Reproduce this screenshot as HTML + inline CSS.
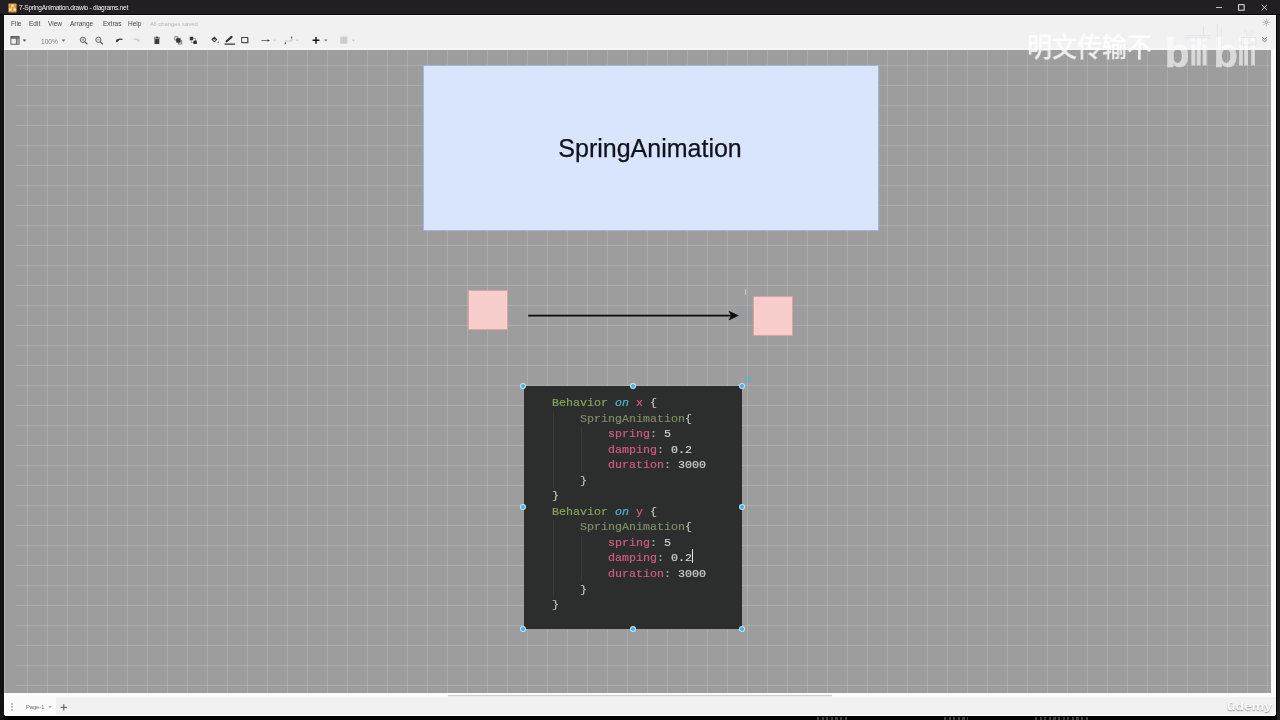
<!DOCTYPE html>
<html lang="en">
<head>
<meta charset="utf-8">
<title>7-SpringAnimation.drawio - diagrams.net</title>
<style>
*{margin:0;padding:0;box-sizing:border-box}
html,body{width:1280px;height:720px;overflow:hidden;background:#0c0c0d;font-family:"Liberation Sans",sans-serif}
.abs{position:absolute}
#title,.mi,.code pre,#wm,#bili,#ud,.gs{will-change:transform}
#win{position:absolute;left:0;top:0;width:1280px;height:720px;background:linear-gradient(to right,#121214 0,#121214 4px,#000 4px,#000 1277px,#1c1c1c 1277px);overflow:hidden}
#titlebar{position:absolute;left:0;top:0;width:1280px;height:15px;background:#211f22;border-bottom:1px solid #050505}
#title{position:absolute;left:19px;top:3.3px;font-size:6.6px;line-height:9px;color:#f2f2f2;white-space:nowrap;letter-spacing:-0.27px}
#app{position:absolute;left:4px;top:15px;width:1272px;height:701px;background:#f1f1f2;border-radius:0 0 3px 3px;overflow:hidden}
#menubar{position:absolute;left:0;top:0;width:1272px;height:17px;background:#f1f1f2;border-top:1.5px solid #fbfbfb}
.mi{position:absolute;top:4px;font-size:6.5px;line-height:8px;color:#444;white-space:nowrap}
#toolbar{position:absolute;left:0;top:17px;width:1272px;height:18px;background:#f1f1f2;border-bottom:2px solid #f6f6f6}
#canvas{position:absolute;left:0;top:35px;width:1267px;height:643px;border-left:1px solid #b2b2b4;background-color:#9d9d9d;overflow:hidden}
#grid{position:absolute;left:11px;top:0;width:1255px;height:643px;
 background-image:linear-gradient(to right,rgba(255,255,255,.135) 1px,transparent 1px),linear-gradient(to bottom,rgba(255,255,255,.135) 1px,transparent 1px);
 background-size:20px 20px;background-position:-9px 15px}
#vscroll{position:absolute;left:1267px;top:35px;width:5px;height:643px;background:#fbfbfb}
#bottombar{position:absolute;left:0;top:678px;width:1272px;height:23px;background:#f1f1f1;border-top:4px solid #fcfcfc;border-bottom:1px solid #fdfdfd}
#pagetab{position:absolute;left:0;top:0;width:52px;height:19px;background:#fbfbfb}
.code{position:absolute;left:524px;top:386px;width:218px;height:243px;background:#2c2e2d}
.code pre{position:absolute;left:28px;top:9.6px;font-family:"Liberation Mono",monospace;font-size:11.67px;line-height:15.55px;color:#cfcfc2;white-space:pre}
.k{color:#86a358}.o{color:#4fb3c4;font-style:italic}.p{color:#d35a82}.t{color:#7b8c66}.n{color:#cfcfcb}.b{color:#c2c2b4}.c{color:#9aa0a6}
.code pre span{-webkit-text-stroke:.2px currentColor}
.ig{position:absolute;width:1px;background:rgba(255,255,255,.06)}
.h{position:absolute;width:6px;height:6px;border-radius:50%;background:#45b1e6;border:.7px solid rgba(220,240,250,.85)}
</style>
</head>
<body>
<div id="win">
 <div id="titlebar">
  <svg class="abs" style="left:7.5px;top:2.5px" width="9" height="10" viewBox="0 0 9 10"><rect x=".4" y=".5" width="8.2" height="9" rx=".8" fill="#e29a3c"/><path d="M4.5 3L2.6 6.2M4.5 3l1.9 3.2" stroke="#f3c98a" stroke-width=".7"/><rect x="3.3" y="1.6" width="2.4" height="2" rx=".3" fill="#fbe3b5"/><rect x="1.1" y="5.4" width="2.5" height="2.1" rx=".3" fill="#fdeedd"/><rect x="5.4" y="5.4" width="2.5" height="2.1" rx=".3" fill="#fdeedd"/></svg>
  <div id="title">7-SpringAnimation.drawio - diagrams.net</div>
  <svg class="abs" style="left:1200px;top:0" width="80" height="15" viewBox="1200 0 80 15">
   <path d="M1216 7.5h6" stroke="#e8e8e8" stroke-width=".8"/>
   <rect x="1238.6" y="4.7" width="5.5" height="5.5" fill="none" stroke="#e8e8e8" stroke-width="1"/>
   <path d="M1261.6 4.8l5.4 5.4M1267 4.8l-5.4 5.4" stroke="#e8e8e8" stroke-width=".8"/>
  </svg>
 </div>
 <div id="app">
  <div id="menubar">
   <span class="mi" style="left:7px">File</span>
   <span class="mi" style="left:24.5px">Edit</span>
   <span class="mi" style="left:44px">View</span>
   <span class="mi" style="left:66px">Arrange</span>
   <span class="mi" style="left:98.5px">Extras</span>
   <span class="mi" style="left:124px">Help</span>
   <span class="mi" style="left:146.3px;color:#b8b8b8;font-size:5.9px">All changes saved</span>
  </div>
  <div id="toolbar">
   <svg class="abs" style="left:0;top:0" width="400" height="18" viewBox="4 32 400 18">
    <!-- sidebar/format icon -->
    <rect x="10.9" y="36.6" width="8.2" height="7.6" fill="none" stroke="#484848" stroke-width=".85"/>
    <path d="M10.9 38.3H19.1M16.4 38.3V44.2" stroke="#484848" stroke-width=".85" fill="none"/><path d="M10.9 37.2H19.1" stroke="#484848" stroke-width=".9"/><rect x="16.8" y="38.7" width="1.9" height="5.1" fill="#9a9a9a"/>
    <path d="M22.6 39.6h3.8l-1.9 2.2z" fill="#555"/>
    <!-- zoom dropdown -->
    <path d="M61.6 39.6h3.8l-1.9 2.2z" fill="#666"/>
    <!-- zoom in -->
    <circle cx="82.9" cy="39.8" r="2.6" fill="none" stroke="#505050" stroke-width=".9"/>
    <path d="M84.9 41.8L87.1 44" stroke="#505050" stroke-width="1.1" stroke-linecap="round"/>
    <path d="M81.6 39.8h2.6M82.9 38.5v2.6" stroke="#666" stroke-width=".6"/>
    <!-- zoom out -->
    <circle cx="98.4" cy="39.8" r="2.6" fill="none" stroke="#505050" stroke-width=".9"/>
    <path d="M100.4 41.8L102.6 44" stroke="#505050" stroke-width="1.1" stroke-linecap="round"/>
    <path d="M97.1 39.8h2.6" stroke="#666" stroke-width=".6"/>
    <!-- undo -->
    <path d="M116.6 41.6C117.4 39.5 119.8 38.7 122.5 39.4" stroke="#333" stroke-width="1.1" fill="none"/>
    <path d="M115.9 39.4l3.3 0.6l-2.6 2.6z" fill="#333"/>
    <!-- redo -->
    <path d="M139.2 41.6C138.4 39.4 136 38.6 133.6 39.3" stroke="#cfcfcf" stroke-width="1.3" fill="none"/>
    <path d="M139.7 39.4l-3.3 0.6l2.6 2.6z" fill="#cfcfcf"/>
    <!-- delete -->
    <path d="M153.8 37.4h6.2v1h-6.2zM155.9 36.6h2v.9h-2zM154.5 38.9h4.8v5h-4.8z" fill="#3c3c3c"/>
    <!-- to front -->
    <rect x="174.8" y="36.8" width="3.2" height="3.2" fill="none" stroke="#555" stroke-width=".7"/>
    <rect x="178.6" y="40.8" width="3.2" height="3.2" fill="none" stroke="#555" stroke-width=".7"/>
    <rect x="176.2" y="38.2" width="4.4" height="4.4" fill="#333"/>
    <!-- to back -->
    <rect x="191.2" y="38.2" width="4.4" height="4.4" fill="#fff" stroke="#777" stroke-width=".6"/>
    <rect x="189.8" y="36.8" width="3.4" height="3.4" fill="#333"/>
    <rect x="193.4" y="40.6" width="3.4" height="3.4" fill="#333"/>
    <!-- fill -->
    <path d="M214.4 36.4l3 3l-3 3l-3-3z" fill="#333"/>
    <path d="M212.6 39.4h3.6l-1.8 1.8z" fill="#f2f2f2"/>
    <circle cx="218.2" cy="42.2" r=".7" fill="#444"/>
    <!-- line color -->
    <path d="M226.6 41.3L231.6 36.9" stroke="#333" stroke-width="2.1" stroke-linecap="round"/>
    <path d="M224.6 44.2h10.5" stroke="#333" stroke-width="1.2"/>
    <!-- shadow -->
    <rect x="241.7" y="37.5" width="6" height="5" fill="#f2f2f2" stroke="#444" stroke-width="1"/>
    <path d="M242.4 43.2h6v-5" stroke="#888" stroke-width=".6" fill="none"/>
    <!-- connection -->
    <path d="M261.4 40.5h7" stroke="#555" stroke-width=".8"/>
    <path d="M270 40.5l-2.6-1.3v2.6z" fill="#444"/>
    <path d="M273 39.7h3.2l-1.6 1.9z" fill="#c8c8c8"/>
    <!-- waypoint -->
    <path d="M285.4 43.6v-2.6h6.2v-3.8" stroke="#bdbdbd" stroke-width=".8" fill="none"/>
    <rect x="284.8" y="42.4" width="1.2" height="1.8" fill="#555"/>
    <rect x="291" y="36.6" width="1.2" height="1.8" fill="#555"/>
    <path d="M295.6 39.7h3.2l-1.6 1.9z" fill="#c8c8c8"/>
    <!-- plus -->
    <path d="M312.6 40.3h6.8M316 36.9v6.8" stroke="#161616" stroke-width="1.5"/>
    <path d="M324 39.6h3.6l-1.8 2z" fill="#777"/>
    <!-- table -->
    <rect x="340.2" y="36.6" width="7.2" height="7.2" fill="#cdcdcd"/>
    <path d="M351.8 39.7h3.2l-1.6 1.9z" fill="#c4c4c4"/>
   </svg>
   <span class="abs gs" style="left:37px;top:5.6px;font-size:6.6px;line-height:8px;color:#7c7c7c">100%</span>
  </div>
  <svg class="abs" style="left:1246px;top:0" width="26" height="35" viewBox="1250 15 26 35">
   <circle cx="1266.3" cy="22.3" r="1.3" fill="none" stroke="#777" stroke-width=".6"/>
   <path d="M1266.3 18.2v2M1266.3 24.4v2M1262.2 22.3h2M1268.4 22.3h2M1263.5 19.5l1.3 1.3M1267.8 23.8l1.3 1.3M1269.1 19.5l-1.3 1.3M1264.8 23.8l-1.3 1.3" stroke="#888" stroke-width=".5"/>
   <path d="M1262.2 37.2l2.4 2l2.4-2M1262.2 39.8l2.4 2l2.4-2" stroke="#666" stroke-width=".8" fill="none"/>
  </svg>
  <div id="canvas">
   <div id="grid"></div>
   <div class="abs" style="left:418px;top:15px;width:455.5px;height:166px;background:#d9e5fc;border:1px solid #a3b6dc"></div>
   <div class="abs" style="left:418px;top:15px;width:455.5px;height:166px;text-align:center;line-height:166px;font-size:25px;color:#10121c;-webkit-text-stroke:.25px #10121c;will-change:transform;text-indent:-1.4px">SpringAnimation</div>
   <div class="abs" style="left:462.7px;top:240.3px;width:40px;height:40px;background:#f8cecc;border:1px solid #d9a3a0"></div>
   <div class="abs" style="left:747.5px;top:245.5px;width:40px;height:40px;background:#f8cecc;border:1px solid #d9a3a0"></div>
   <svg class="abs" style="left:519px;top:257.8px" width="220" height="16" viewBox="0 0 220 16"><path d="M4.2 7.6H208" stroke="#0a0a0a" stroke-width="1.8" fill="none"/><path d="M214.4 7.6L205 3.3L207.4 7.6L205 11.9Z" fill="#0a0a0a" stroke="#0a0a0a" stroke-width=".6" stroke-linejoin="miter"/></svg>
  </div>
  <div id="vscroll"></div>
  <div class="abs" style="left:444px;top:680px;width:384px;height:2px;background:linear-gradient(#cbcbcb 0,#cbcbcb 1px,#eee 1px);z-index:3"></div>
  <div id="bottombar"><div id="pagetab"></div>
   <svg class="abs" style="left:0;top:0" width="80" height="19" viewBox="4 697 80 19">
    <circle cx="12" cy="704" r=".8" fill="#777"/><circle cx="12" cy="707" r=".8" fill="#777"/><circle cx="12" cy="710" r=".8" fill="#777"/>
    <path d="M48.6 706.2h3l-1.5 1.7z" fill="#888"/>
    <path d="M60.6 707.3h6.4M63.8 704.1v6.4" stroke="#555" stroke-width="1"/>
   </svg>
   <span class="abs gs" style="left:22px;top:6.2px;font-size:5.7px;line-height:8px;color:#6a6a6a">Page-1</span>
  </div>
 </div>
 <div class="code"><i class="ig" style="left:29px;top:26px;height:76px"></i><i class="ig" style="left:57px;top:41px;height:45px"></i><i class="ig" style="left:29px;top:134px;height:76px"></i><i class="ig" style="left:57px;top:150px;height:45px"></i><pre><span class="k">Behavior</span> <span class="o">on</span> <span class="p">x</span> <span class="b">{</span>
    <span class="t">SpringAnimation</span><span class="b">{</span>
        <span class="p">spring</span><span class="c">:</span> <span class="n">5</span>
        <span class="p">damping</span><span class="c">:</span> <span class="n">0.2</span>
        <span class="p">duration</span><span class="c">:</span> <span class="n">3000</span>
    <span class="b">}</span>
<span class="b">}</span>
<span class="k">Behavior</span> <span class="o">on</span> <span class="p">y</span> <span class="b">{</span>
    <span class="t">SpringAnimation</span><span class="b">{</span>
        <span class="p">spring</span><span class="c">:</span> <span class="n">5</span>
        <span class="p">damping</span><span class="c">:</span> <span class="n">0.2</span>
        <span class="p">duration</span><span class="c">:</span> <span class="n">3000</span>
    <span class="b">}</span>
<span class="b">}</span></pre></div>
 <div class="h" style="left:520.3px;top:382.6px"></div>
 <div class="h" style="left:629.5px;top:382.6px"></div>
 <div class="h" style="left:738.8px;top:382.6px"></div>
 <div class="h" style="left:520.3px;top:504.2px"></div>
 <div class="h" style="left:738.8px;top:504.2px"></div>
 <div class="h" style="left:520.3px;top:625.8px"></div>
 <div class="h" style="left:629.5px;top:625.8px"></div>
 <div class="h" style="left:738.8px;top:625.8px"></div>
 <div class="abs" style="left:692px;top:549px;width:1px;height:14px;background:#e8e8e8"></div>
 <div class="abs" style="left:744.9px;top:376px;width:6.6px;height:6.6px;border-radius:50%;background:rgba(70,185,215,.45)"></div>
 <div class="abs" style="left:745px;top:289px;width:1px;height:6px;background:rgba(255,255,255,.45)"></div>
 <div class="abs" style="left:817px;top:717.4px;width:31px;height:2.6px;background:repeating-linear-gradient(to right,rgba(150,150,150,.42) 0,rgba(150,150,150,.42) 2.2px,transparent 2.2px,transparent 4.6px)"></div>
 <div class="abs" style="left:944px;top:717.4px;width:24px;height:2.6px;background:repeating-linear-gradient(to right,rgba(150,150,150,.42) 0,rgba(150,150,150,.42) 2.2px,transparent 2.2px,transparent 4.6px)"></div>
 <div class="abs" style="left:1035px;top:717.4px;width:53px;height:2.6px;background:repeating-linear-gradient(to right,rgba(150,150,150,.42) 0,rgba(150,150,150,.42) 2.2px,transparent 2.2px,transparent 4.6px)"></div>
 <div class="abs" style="left:736px;top:305px;width:16px;height:16px;background:rgba(120,150,185,.14)"></div>
 <div id="wm" class="abs" style="left:1027px;top:28.3px;font-family:'Liberation Sans','Noto Sans CJK SC',sans-serif;font-weight:500;font-size:27px;line-height:40px;color:rgba(255,255,255,.82);-webkit-text-stroke:.18px rgba(255,255,255,.82);white-space:nowrap;transform:scaleX(.925);transform-origin:0 0">明文传输不</div>
 <div id="bili" class="abs" style="left:1165.3px;top:28.8px;font-weight:400;font-size:37px;line-height:44px;color:#fff;opacity:.62;white-space:nowrap;-webkit-text-stroke:.45px #fff"><span style="letter-spacing:-.1px;font-weight:700;font-size:40px;position:relative;top:1.6px">b</span><span style="letter-spacing:-3.2px">i</span><span style="letter-spacing:-2px">l</span><span style="letter-spacing:4.6px">i</span><span style="letter-spacing:-1.1px;font-weight:700;font-size:40px;position:relative;top:1.6px">b</span><span style="letter-spacing:-2.9px">i</span><span style="letter-spacing:-1.3px">l</span><span>i</span></div>
 <svg class="abs" style="left:1160px;top:20px" width="110" height="30" viewBox="1160 20 110 30"><path d="M1217.2 24v25M1221.3 27v22M1203.5 26.5v9M1241.5 37.5h14.5v7.5h-14.5zM1245 30l3 6M1253 30l-3 6M1184.5 35.5h26M1184.5 38h26" stroke="rgba(140,140,145,.16)" stroke-width=".7" fill="none"/></svg>
 <div id="ud" class="abs" style="left:1227px;top:698.5px;font-weight:700;font-size:11px;line-height:14px;color:rgba(255,255,255,.95);text-shadow:0 .5px 1.2px rgba(80,80,80,.6);white-space:nowrap;transform:scaleX(1.27);transform-origin:0 0">ûdemy</div>
</div>
</body>
</html>
